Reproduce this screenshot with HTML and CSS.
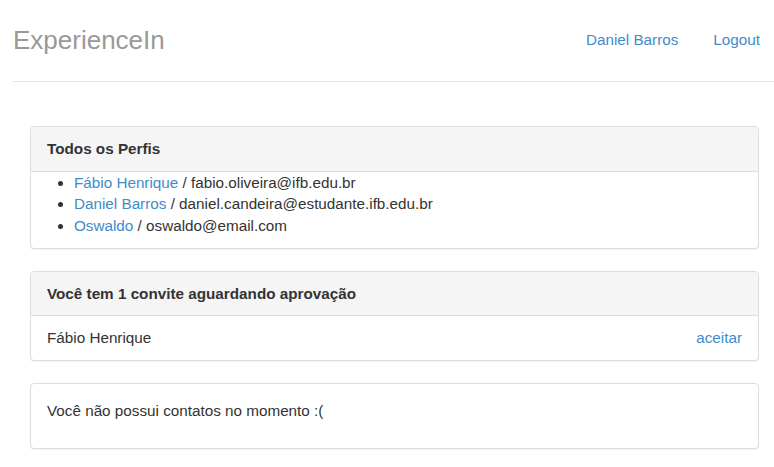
FILE: index.html
```html
<!DOCTYPE html>
<html lang="pt-BR">
<head>
<meta charset="utf-8">
<title>ExperienceIn</title>
<link rel="stylesheet" href="styles.css">
</head>
<body>
<header class="topbar">
  <a class="brand" href="#">ExperienceIn</a>
  <nav class="nav">
    <a href="#">Daniel Barros</a>
    <a href="#">Logout</a>
  </nav>
</header>
<main class="content">
  <section class="panel">
    <div class="panel-heading">Todos os Perfis</div>
    <ul class="profiles">
      <li><a href="#">Fábio Henrique</a> / fabio.oliveira@ifb.edu.br</li>
      <li><a href="#">Daniel Barros</a> / daniel.candeira@estudante.ifb.edu.br</li>
      <li><a href="#">Oswaldo</a> / oswaldo@email.com</li>
    </ul>
  </section>
  <section class="panel">
    <div class="panel-heading">Você tem 1 convite aguardando aprovação</div>
    <div class="invite">
      <span>Fábio Henrique</span>
      <a href="#">aceitar</a>
    </div>
  </section>
  <section class="panel">
    <div class="panel-body">
      <p>Você não possui contatos no momento :(</p>
    </div>
  </section>
</main>
</body>
</html>
```

FILE: styles.css
```css
* { box-sizing: border-box; }
html, body {
  margin: 0;
  padding: 0;
  background: #fff;
}
body {
  font-family: "Liberation Sans", Arial, Helvetica, sans-serif;
  font-size: 15.25px;
  line-height: 21.8px;
  color: #333;
}
a {
  color: #428bca;
  text-decoration: none;
}
.topbar {
  margin-left: 13px;
  height: 82px;
  border-bottom: 1px solid #e5e5e5;
  display: flex;
  align-items: center;
  justify-content: space-between;
  padding-bottom: 2px;
}
.brand {
  color: #999;
  font-size: 26px;
  line-height: 30px;
}
.nav {
  display: flex;
  gap: 35px;
  padding-right: 14px;
}
.nav a {
  font-size: 15.25px;
  line-height: 21.8px;
}
.content {
  margin: 44px 15px 0 30px;
}
.panel {
  border: 1px solid #ddd;
  border-radius: 4px;
  margin-bottom: 22px;
  background: #fff;
  box-shadow: 0 1px 1px rgba(0, 0, 0, 0.05);
  overflow: hidden;
}
.panel-heading {
  background: #f5f5f5;
  border-bottom: 1px solid #ddd;
  padding: 10.9px 16px;
  font-weight: bold;
}
.profiles {
  margin: 0 0 10.9px;
  padding-left: 43px;
}
.invite {
  display: flex;
  justify-content: space-between;
  padding: 10.9px 16px 10.4px;
}
.panel-body {
  padding: 16px;
}
.panel-body p {
  margin: 0 0 10.9px;
}
```
